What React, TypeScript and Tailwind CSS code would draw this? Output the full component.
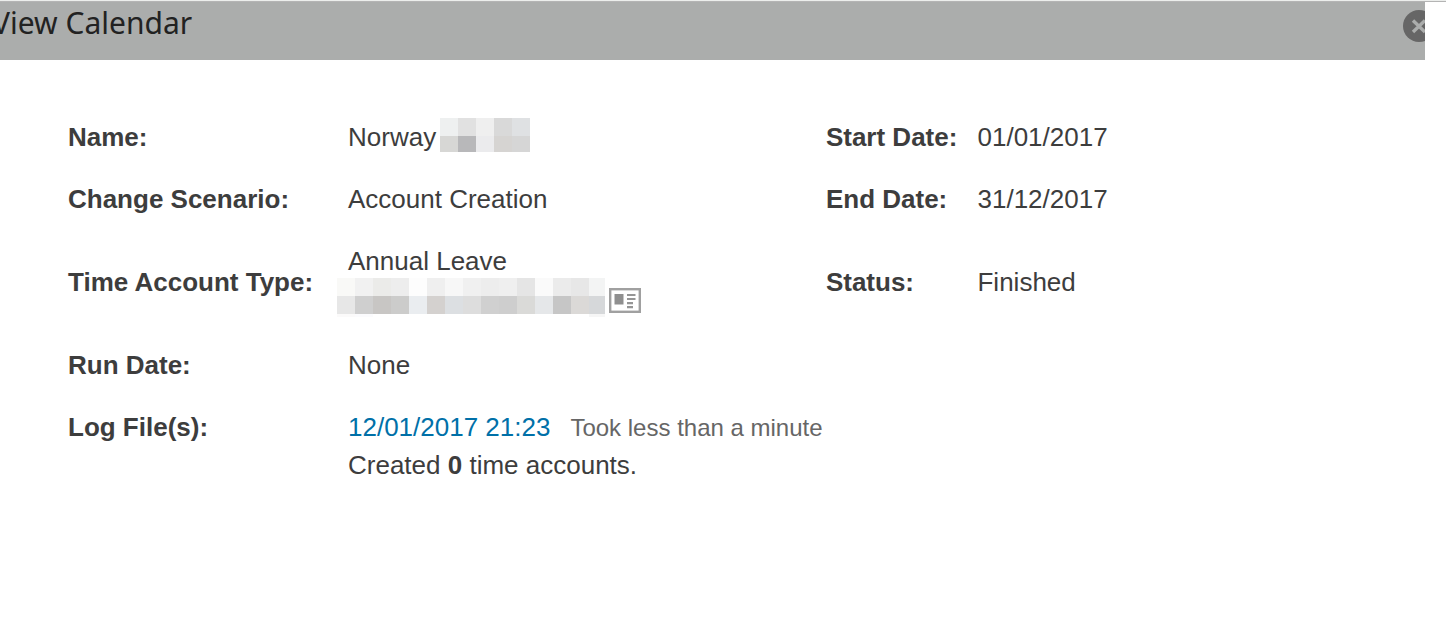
import { ReactNode } from 'react'

const nameMosaic = [
    ['bg-[#eef0f0]', 'bg-[#e1e1e1]', 'bg-[#efefef]', 'bg-[#d9d9d9]', 'bg-[#dfe1e3]'],
    ['bg-[#d7d7d5]', 'bg-[#b8b8ba]', 'bg-[#ebebed]', 'bg-[#d6d4d2]', 'bg-[#d6d6d6]'],
]

const accountMosaic = [
    [
        'bg-[#f9f9f7]', 'bg-[#f1f1f1]', 'bg-[#ebebe9]', 'bg-[#ededed]', 'bg-[#fdfdfd]',
        'bg-[#efefef]', 'bg-[#f7f7f7]', 'bg-[#f0f0f0]', 'bg-[#ededed]', 'bg-[#efefef]',
        'bg-[#e5e5e5]', 'bg-[#fafafa]', 'bg-[#ebebeb]', 'bg-[#e7e7e7]', 'bg-[#f3f4f4]',
    ],
    [
        'bg-[#e7e7e7]', 'bg-[#cfcfcf]', 'bg-[#c8c6c4]', 'bg-[#cccccb]', 'bg-[#eaedf0]',
        'bg-[#d4d1cf]', 'bg-[#dcdfe2]', 'bg-[#dddddd]', 'bg-[#d0d0d0]', 'bg-[#cecece]',
        'bg-[#dadad8]', 'bg-[#e5e7e9]', 'bg-[#c6c6c6]', 'bg-[#dbd9d7]', 'bg-[#d6d8da]',
    ],
    [
        'bg-[#fbfafa]', 'bg-[#fbfbfd]', 'bg-white', 'bg-white', 'bg-white',
        'bg-white', 'bg-white', 'bg-white', 'bg-white', 'bg-white',
        'bg-white', 'bg-white', 'bg-white', 'bg-white', 'bg-[#f6f6f6]',
    ],
]

function Mosaic({ rows, className }: { rows: string[][]; className: string }) {
    return (
        <div aria-hidden="true" className={`overflow-hidden ${className}`}>
            {rows.map((cells, y) => (
                <div key={y} className="flex">
                    {cells.map((color, x) => (
                        <div key={x} className={`size-[18px] shrink-0 ${color}`} />
                    ))}
                </div>
            ))}
        </div>
    )
}

function CardIcon() {
    return (
        <svg width="32" height="25" viewBox="0 0 32 25" aria-hidden="true">
            <rect x="1.2" y="1.2" width="29.6" height="22.6" fill="#fff" stroke="#a0a0a0" strokeWidth="2.4" />
            <rect x="5.5" y="6" width="9" height="10.5" fill="#8f8f8f" />
            <path d="M18 7h8.5M18 11h8.5M18 15.2h6M18 19.2h6" stroke="#959595" strokeWidth="2.2" />
        </svg>
    )
}

function CloseIcon() {
    return (
        <svg width="32" height="32" viewBox="0 0 32 32" className="shrink-0" aria-hidden="true">
            <circle cx="16" cy="16" r="16" fill="#666" />
            <path d="M10 10.5l12 11.5M22 10.5l-12 11.5" stroke="#abadac" strokeWidth="3.4" />
        </svg>
    )
}

function Label({ children }: { children: ReactNode }) {
    return (
        <th scope="row" className="py-3 text-left font-bold whitespace-nowrap">
            {children}
        </th>
    )
}

export default function App() {
    return (
        <div className="min-h-screen overflow-hidden bg-white font-['Liberation_Sans',Arial,sans-serif] text-[26px] leading-[38px] text-[#3d3d3d]">
            {/* Header */}
            <div className="h-0.5 border-t border-b border-t-[#eceeec] border-b-[#b4b4b4]" />
            <header className="mr-[21px] flex h-[58px] items-start justify-between overflow-hidden bg-[#abadac]">
                <h1 className="-ml-2 font-['Noto_Sans','Open_Sans',sans-serif] text-[30px] leading-[42px] text-[#222]">
                    View Calendar
                </h1>
                <button type="button" aria-label="Close" className="mt-2 -mr-2.5">
                    <CloseIcon />
                </button>
            </header>

            {/* Details */}
            <main className="pt-[46px] pl-[68px]">
                <table className="w-full table-fixed">
                    <colgroup>
                        <col className="w-[280px]" />
                        <col />
                        <col className="w-[11%]" />
                        <col className="w-[34%]" />
                    </colgroup>
                    <tbody>
                        <tr>
                            <Label>Name:</Label>
                            <td className="py-3">
                                <div className="flex items-start gap-1">
                                    Norway
                                    <Mosaic rows={nameMosaic} className="max-h-[34px]" />
                                </div>
                            </td>
                            <Label>Start Date:</Label>
                            <td className="py-3">01/01/2017</td>
                        </tr>
                        <tr>
                            <Label>Change Scenario:</Label>
                            <td className="py-3">Account Creation</td>
                            <Label>End Date:</Label>
                            <td className="py-3">31/12/2017</td>
                        </tr>
                        <tr>
                            <Label>Time Account Type:</Label>
                            <td className="py-3">
                                Annual Leave
                                <div className="-mt-0.5 -ml-[11px] flex h-11 items-start gap-1">
                                    <Mosaic rows={accountMosaic} className="max-h-[39px] w-[268px]" />
                                    <a href="#account" aria-label="Time account details" className="mt-2.5">
                                        <CardIcon />
                                    </a>
                                </div>
                            </td>
                            <Label>Status:</Label>
                            <td className="py-3">Finished</td>
                        </tr>
                        <tr>
                            <Label>Run Date:</Label>
                            <td className="py-3">None</td>
                        </tr>
                        <tr className="align-top">
                            <Label>Log File(s):</Label>
                            <td colSpan={3} className="py-3">
                                <a href="#log" className="text-[#0070a8]">12/01/2017 21:23</a>
                                <span className="ml-5 text-2xl leading-9 text-[#666]">Took less than a minute</span>
                                <p>
                                    Created <b>0</b> time accounts.
                                </p>
                            </td>
                        </tr>
                    </tbody>
                </table>
            </main>
        </div>
    )
}
